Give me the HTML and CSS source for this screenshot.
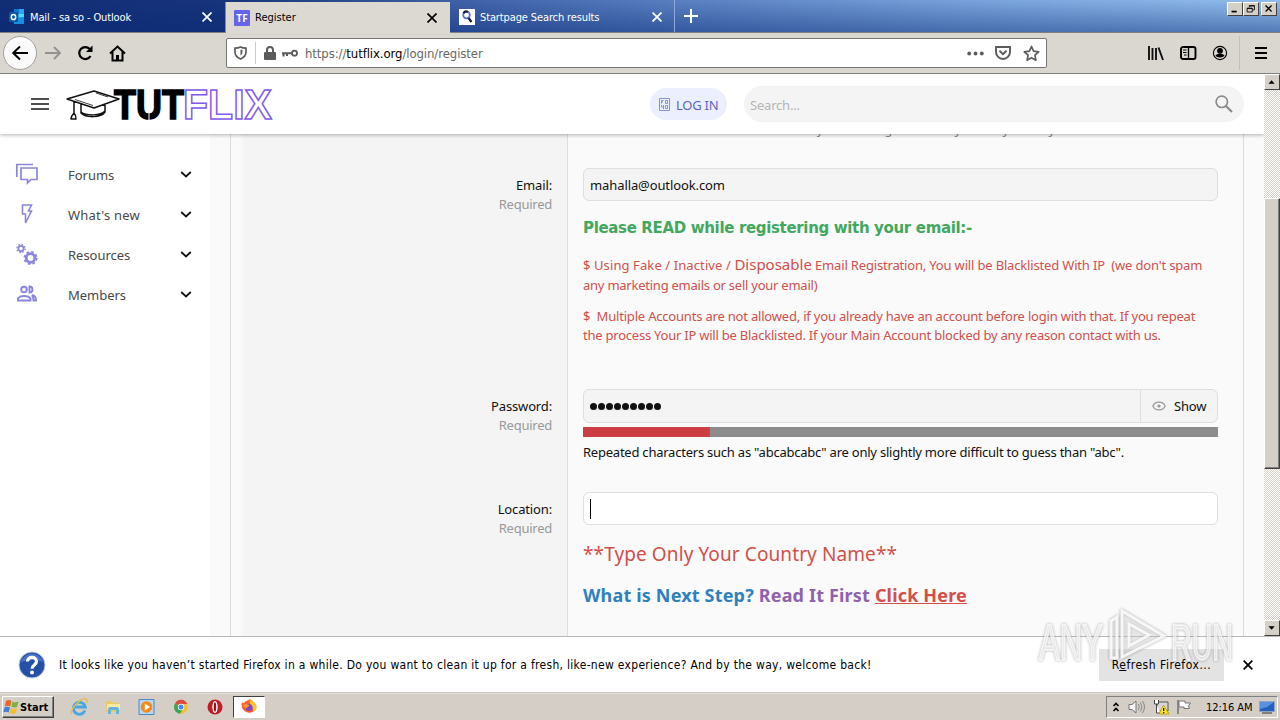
FILE: index.html
```html
<!DOCTYPE html>
<html lang="en">
<head>
<meta charset="utf-8">
<title>Register</title>
<link rel="stylesheet" href="styles.css">
</head>
<body>
<div class="tabs">
  <div class="tab tab-first">
    <svg width="16" height="16" viewBox="0 0 16 16"><path d="M5 0h10v9H5z" fill="#28a8ea"/><path d="M5 0h5v5H5z" fill="#0f78c8"/><path d="M10 5h5v4h-5z" fill="#50d9ff"/><path d="M4 9l11-1v7H5z" fill="#1490df"/><rect y="3" width="9" height="10" rx="1" fill="#0358a7"/><ellipse cx="4.5" cy="8" rx="2.2" ry="2.6" fill="none" stroke="#fff" stroke-width="1.5"/></svg>
    <span class="tab-title t-mail">Mail - sa so - Outlook</span>
    <svg class="x" width="10" height="10" viewBox="0 0 10 10"><path d="M.5.5l9 9m0-9l-9 9"/></svg>
  </div>
  <div class="tab tab-active">
    <span class="tf">TF</span>
    <span class="tab-title t-reg">Register</span>
    <svg class="x" width="10" height="10" viewBox="0 0 10 10"><path d="M.5.5l9 9m0-9l-9 9"/></svg>
  </div>
  <div class="tab tab-last">
    <svg width="16" height="16" viewBox="0 0 16 16"><path d="M0 0h16v16H0z" fill="#fff"/><circle cx="7.5" cy="6" r="3.3" fill="none" stroke="#5a70e0" stroke-width="1.8"/><path d="M4.5 4.2A3.4 3.4 0 0 1 9 3M9.5 9l3 4" stroke="#151a40" stroke-width="2.2" fill="none"/></svg>
    <span class="tab-title t-start">Startpage Search results</span>
    <svg class="x" width="10" height="10" viewBox="0 0 10 10"><path d="M.5.5l9 9m0-9l-9 9"/></svg>
  </div>
  <svg class="plus" width="14" height="14" viewBox="0 0 14 14"><path d="M7 0v14M0 7h14" stroke="#fff" stroke-width="2"/></svg>
  <div class="winbtns">
    <svg class="wb" width="16" height="14" viewBox="0 0 16 14"><path d="M4 10h6" stroke="#000" stroke-width="2"/></svg>
    <svg class="wb" width="16" height="14" viewBox="0 0 16 14"><path d="M6 5V3h6v5h-2M6 3.500h6M3.500 6h6v4.500h-6zM3.500 6.500h6" stroke="#000" fill="none"/></svg>
    <svg class="wb wb-close" width="16" height="14" viewBox="0 0 16 14"><path d="M4 3l7 7m0-7l-7 7" stroke="#000" stroke-width="1.600"/></svg>
  </div>
</div>

<div class="toolbar">
  <span class="back"><svg width="18" height="16" viewBox="0 0 18 16"><path d="M17 8H2.500M9 1.500L2.200 8 9 14.500" stroke="#000" stroke-width="2" fill="none"/></svg></span>
  <svg class="fwd" width="17" height="14" viewBox="0 0 17 14"><path d="M0 7h15M9 1l6 6-6 6" stroke="#939290" stroke-width="1.900" fill="none"/></svg>
  <svg class="reload" width="17" height="16" viewBox="0 0 17 16"><path d="M13.500 11a6 6 0 1 1-.8-7" stroke="#000" stroke-width="2.200" fill="none"/><path d="M15.500.5V7H9z"/></svg>
  <svg class="home" width="17" height="17" viewBox="0 0 17 17"><path d="M1 8.500l7.500-7 7.500 7M3.500 7v8.500h10V7" stroke="#000" stroke-width="2" fill="none"/><path d="M7 10h3v5H7z"/></svg>
  <div class="url">
    <svg class="shield" width="13" height="14" viewBox="0 0 13 14"><path d="M6.500 1C4.500 2 2.500 2.200 1 2.200V6c0 3.500 2 5.500 5.500 7C10 11.500 12 9.500 12 6V2.200C10.500 2.200 8.500 2 6.500 1z" stroke="#5b5b5b" stroke-width="1.700" fill="none"/><path d="M6.500 3.500v6c1.500-1 2-2 2-5.500z" fill="#5b5b5b"/></svg>
    <i class="url-sep"></i>
    <svg class="lock" width="12" height="14" viewBox="0 0 12 14"><path d="M3 7V4a3 3 0 0 1 6 0v3" stroke="#5b5b5b" stroke-width="2" fill="none"/><rect y="6" width="12" height="8" rx="1" fill="#5b5b5b"/></svg>
    <svg class="key" width="16" height="9" viewBox="0 0 16 9"><circle cx="12.500" cy="4.200" r="2.500" stroke="#5b5b5b" stroke-width="1.800" fill="none"/><path d="M10 4.200H0M1.500 4v3.500M5 4v3" stroke="#5b5b5b" stroke-width="2" fill="none"/></svg>
    <span class="addr">https://<b>tutflix.org</b>/login/register</span>
    <svg class="dots" width="17" height="5" viewBox="0 0 17 5" fill="#5b5b5b"><circle cx="2.200" cy="2.500" r="1.900"/><circle cx="8.500" cy="2.500" r="1.900"/><circle cx="14.800" cy="2.500" r="1.900"/></svg>
    <svg class="pocket" width="16" height="14" viewBox="0 0 16 14"><path d="M1 1h14v5a7 7 0 0 1-14 0z M4.500 4.800L8 8.200l3.500-3.400" stroke="#5b5b5b" stroke-width="1.900" fill="none"/></svg>
    <svg class="star" width="17" height="17" viewBox="0 0 17 17"><path d="M8.500 1.500l2.100 4.700 5.100.6-3.800 3.400 1 5-4.400-2.500-4.400 2.500 1-5L1.300 6.800l5.100-.6z" stroke="#5b5b5b" stroke-width="1.700" fill="none" stroke-linejoin="round"/></svg>
  </div>
  <svg class="lib" width="16" height="15" viewBox="0 0 16 15"><path d="M1 0v14M4.500 2v12M8 2v12M10.500 1.500L15 14" stroke="#111" stroke-width="1.900"/></svg>
  <svg class="side-i" width="17" height="14" viewBox="0 0 17 14"><rect x="1" y="1" width="14.500" height="12" rx="2" stroke="#000" stroke-width="1.900" fill="none"/><path d="M8.500 1v12" stroke="#000" stroke-width="1.400"/><path d="M3 4h3.500M3 6.500h3.500M4 9h2.500" stroke="#000"/></svg>
  <svg class="acct" width="16" height="16" viewBox="0 0 16 16"><circle cx="8" cy="8" r="6.600" stroke="#000" stroke-width="1.100" fill="none"/><circle cx="8" cy="5.800" r="2.900"/><path d="M3.500 10.500c1.500-2.500 7.500-2.500 9 0-1.500 2.500-7 2.800-9 0z"/></svg>
  <i class="tb-sep"></i>
  <svg class="menu" width="12" height="14" viewBox="0 0 12 14"><path d="M0 2h12M0 7h12M0 12h12" stroke="#000" stroke-width="2"/></svg>
</div>

<div class="view">
  <div class="page">
    <header class="head">
      <svg class="burger" width="18" height="12" viewBox="0 0 18 12"><path d="M0 1h18M0 6h18M0 11h18" stroke="#4f4f4f" stroke-width="2"/></svg>
      <svg class="logo" width="210" height="50" viewBox="0 -5 210 50">
        <path d="M15 19v9c5 5 20 5 24-1v-8M15 27c5 4 20 4 24-1M1 14L28 6l25 8-25 9zM8 16v14M8 28c-3 3-3 5-3 6h5c0-2 0-4-2-6z" fill="#fff" stroke="#111" stroke-width="1.500" stroke-linejoin="round"/>
        <path d="M30 8l12 4M9 14.500l18 6M18 30l5 1.500" stroke="#111" stroke-width=".8" fill="none"/>
        <text class="logo-tut" x="48" y="34" textLength="70" lengthAdjust="spacingAndGlyphs">TUT</text>
        <path d="M83 27v9M59.500 10" stroke="#fff" stroke-width="1"/>
        <text class="logo-flix" x="117" y="34" textLength="89" lengthAdjust="spacingAndGlyphs">FLIX</text>
      </svg>
      <a class="login"><svg width="11" height="13" viewBox="0 0 11 13"><path d="M.5.500h10v12H.5zM2.500 5.500v-3h2M2.500 4h1.500M6.500 2.500h2v3h-2zM2.500 7v2h2M4.500 7v4M6.500 7.500h2v3h-2z" fill="none" stroke="#7179d2" stroke-width=".8"/></svg><span>LOG IN</span></a>
      <div class="search"><span>Search...</span><svg width="18" height="18" viewBox="0 0 18 18"><circle cx="6.800" cy="6.800" r="5.700" fill="none" stroke="#8b8b8b" stroke-width="1.700"/><path d="M11 11l6 6" stroke="#8b8b8b" stroke-width="2.200"/></svg></div>
    </header>
    <div class="body">
      <nav class="nav">
        <a><svg width="24" height="24" viewBox="0 0 24 24"><path d="M1.800 15V2.500H18M6 6h16v11.500h-6L12.500 21v-3.500H6z" fill="none" stroke="#8b86dc" stroke-width="1.700"/></svg><span>Forums</span><svg class="chev" width="12" height="7" viewBox="0 0 12 7"><path d="M1.200 1L6 5.500 10.800 1"/></svg></a>
        <a><svg width="24" height="24" viewBox="0 0 24 24"><path d="M7.500 3h9l-3 6h3L10.500 21v-9h-3z" fill="none" stroke="#8b86dc" stroke-width="1.600"/></svg><span class="n2">What's new</span><svg class="chev" width="12" height="7" viewBox="0 0 12 7"><path d="M1.200 1L6 5.500 10.800 1"/></svg></a>
        <a><svg width="24" height="24" viewBox="0 0 24 24" fill="none" stroke="#8b86dc"><circle cx="6" cy="6.500" r="2.600" stroke-width="1.600"/><circle cx="6" cy="6.500" r="4" stroke-width="1.400" stroke-dasharray="1.600 1.540"/><circle cx="15.500" cy="16" r="4.300" stroke-width="2.800"/><circle cx="15.500" cy="16" r="6.100" stroke-width="1.800" stroke-dasharray="2.500 2.290"/></svg><span>Resources</span><svg class="chev" width="12" height="7" viewBox="0 0 12 7"><path d="M1.200 1L6 5.500 10.800 1"/></svg></a>
        <a><svg width="24" height="24" viewBox="0 0 24 24" fill="none" stroke="#8b86dc" stroke-width="1.900"><circle cx="9" cy="7.500" r="2.800"/><path d="M14.500 4.500a3 3 0 0 1 0 6zM3 18.500v-2c2-3.300 10.500-3.300 12.500 0v2zM17 13c2.500.5 4 2 4 5.500h-2.500c0-2-.5-3.500-1.500-5.500"/></svg><span>Members</span><svg class="chev" width="12" height="7" viewBox="0 0 12 7"><path d="M1.200 1L6 5.500 10.800 1"/></svg></a>
      </nav>
      <main class="main">
        <div class="panel">
          <div class="row row-top"><div class="lab"></div><div class="fld"><p class="hint">This is the name that will be shown with your messages. You may use any name you wish.</p></div></div>
          <div class="row row-email">
            <div class="lab"><span>Email:</span><small>Required</small></div>
            <div class="fld">
              <div class="inp"><span class="v-mail">mahalla@outlook.com</span></div>
              <h4 class="green">Please READ while registering with your email:-</h4>
              <p class="red r1"><span class="a1">$ Using Fake / Inactive / </span><span class="big">Disposable</span><span class="a2"> Email Registration, You will be Blacklisted With IP&nbsp; (we don't spam</span><br><span class="a3">any marketing emails or sell your email)</span></p>
              <p class="red r2"><span class="a4">$&nbsp; Multiple Accounts are not allowed, if you already have an account before login with that. If you repeat</span><br><span class="a5">the process Your IP will be Blacklisted. If your Main Account blocked by any reason contact with us.</span></p>
            </div>
          </div>
          <div class="row row-pass">
            <div class="lab"><span>Password:</span><small>Required</small></div>
            <div class="fld">
              <div class="inp inp-pass"><span class="bullets"><i></i><i></i><i></i><i></i><i></i><i></i><i></i><i></i><i></i></span><span class="show"><svg width="14" height="10" viewBox="0 0 14 10"><path d="M.8 5C3-.2 11-.2 13.200 5 11 10.200 3 10.200.8 5z" fill="none" stroke="#999" stroke-width="1.200"/><circle cx="7" cy="5" r="1.600" fill="#999"/></svg>Show</span></div>
              <div class="meter"><i></i></div>
              <p class="note">Repeated characters such as "abcabcabc" are only slightly more difficult to guess than "abc".</p>
            </div>
          </div>
          <div class="row row-loc">
            <div class="lab"><span>Location:</span><small>Required</small></div>
            <div class="fld">
              <div class="inp inp-loc"><i class="caret"></i></div>
              <p class="type">**Type Only Your Country Name**</p>
              <p class="next"><span class="blue">What is Next Step?</span> <span class="purple">Read It First</span> <a>Click Here</a></p>
            </div>
          </div>
        </div>
      </main>
    </div>
  </div>
  <div class="scroll">
    <svg class="sb" width="16" height="16" viewBox="0 0 16 16"><path d="M4 10h7L7.500 6z"/></svg>
    <div class="thumb"></div>
    <svg class="sb sb-down" width="16" height="16" viewBox="0 0 16 16"><path d="M4 6h7l-3.500 4z"/></svg>
  </div>
</div>

<div class="notice">
  <svg class="q" width="28" height="28" viewBox="0 0 28 28"><circle cx="14" cy="14" r="13" fill="#2450a8" stroke="#b9c6e0"/><path d="M3 11a11.500 11.500 0 0 1 22 0c-7-3-15-2-22 0z" fill="#4d74c4"/><path d="M9.500 10.500c0-5.500 9-5.500 9 0 0 3.500-4.500 3.500-4.500 7.200" fill="none" stroke="#fff" stroke-width="3.200"/><circle cx="14" cy="21.500" r="2" fill="#fff"/></svg>
  <span class="notice-t">It looks like you haven’t started Firefox in a while. Do you want to clean it up for a fresh, like-new experience? And by the way, welcome back!</span>
  <span class="refresh"><span>R<u>e</u>fresh Firefox...</span></span>
  <svg class="nx" width="10" height="10" viewBox="0 0 10 10"><path d="M.7.7l8.600 8.600m0-8.600L.7 9.300" stroke="#000" stroke-width="1.800"/></svg>
</div>

<div class="task">
  <div class="start"><svg width="17" height="16" viewBox="0 0 17 16"><path d="M3 2c2-1.500 4-1 5.500 0L7.300 7.500C5.500 6.500 4 6.500 1.800 7.500z" fill="#e8662b"/><path d="M9.500 2.500c2 1.200 4 1 6 0l-1.300 5.300c-2 1-4 .8-5.800-.3z" fill="#79b540"/><path d="M1.500 8.500c2-1 4-.8 5.500 0l-1.300 5c-1.700-1-3.500-1-5.500 0z" fill="#3f82d6"/><path d="M8 9c2 1.200 4 1 6 .2l-1.400 5c-2 1-4 .8-5.900-.4z" fill="#f6bf26"/></svg><b>Start</b></div>
  <svg class="ti" width="18" height="18" viewBox="0 0 18 18"><path d="M15 12.500A6 6 0 1 1 15.300 9H5" fill="none" stroke="#48a6e2" stroke-width="2.800"/><path d="M1.500 16C-.5 12 12-2.500 16.500 1.500c1 1 .5 2.500 0 3.500" fill="none" stroke="#e6bd48" stroke-width="1.400"/></svg>
  <svg class="ti" width="18" height="18" viewBox="0 0 18 18"><path d="M2 3h6l1 2h7v9H2z" fill="#eccb62"/><path d="M3 6h13v6H3z" fill="#f9e9a7"/><path d="M4 16V11q0-2 2-2h7q2 0 2 2v5h-3v-4H7v4z" fill="#65b4dc"/></svg>
  <svg class="ti" width="18" height="18" viewBox="0 0 18 18"><path d="M1 1.500h15v15H1z" fill="#b7d6f0" stroke="#4b89c8"/><circle cx="8.500" cy="9" r="5.800" fill="#f28a19"/><path d="M6.800 5.500L12 9l-5.200 3.500z" fill="#fff"/></svg>
  <svg class="ti" width="18" height="18" viewBox="0 0 18 18"><circle cx="9" cy="9" r="6.800" fill="#f2c230"/><path d="M9 9L3 5.500a6.800 6.800 0 0 1 12.300.5H9z" fill="#dd4b3c"/><path d="M9 9L3 5.500A6.800 6.800 0 0 0 8 15.700L11 11z" fill="#3ba35a"/><circle cx="9" cy="9" r="3.200" fill="#fff"/><circle cx="9" cy="9" r="2.500" fill="#4688ea"/></svg>
  <svg class="ti" width="18" height="18" viewBox="0 0 18 18"><circle cx="9" cy="9" r="7.500" fill="#c01c22"/><ellipse cx="9" cy="9" rx="2.700" ry="6" fill="#fff"/><ellipse cx="9" cy="9" rx="1.200" ry="4.800" fill="#9a1218"/></svg>
  <div class="ff"><svg width="18" height="18" viewBox="0 0 18 18"><path d="M2 4.500l2 .5C6 2.500 8 3 10 1c3 2 6 4 6.500 8.500a7.500 7.500 0 1 1-14.500-5z" fill="#fb5f2d"/><path d="M10 1c3 2 6 4 6.500 8.500-.5 3-2 4-3.500 4C14.500 8 8 7 10 1z" fill="#ffc531"/><circle cx="9" cy="9.500" r="3.500" fill="#7948d4"/><path d="M3 7c3-2 5-1 6.500.5L6 10.500z" fill="#ff9a2d"/></svg></div>
  <div class="tray">
    <svg width="8" height="12" viewBox="0 0 8 12"><path d="M1.500 5L4 2.500 6.500 5M1.500 10L4 7.500 6.500 10" fill="none" stroke="#000" stroke-width="1.600"/></svg>
    <svg class="tr-v" width="18" height="14" viewBox="0 0 18 14"><path d="M1 4.500h3l4-3.500v12L4 9.500H1z" fill="#f5f5f5" stroke="#777"/><path d="M10.500 4q1.500 3 0 6M12.500 2.500q3 4.500 0 9M14.500 1q4 6 0 12" fill="none" stroke="#888"/></svg>
    <svg class="tr-n" width="17" height="16" viewBox="0 0 17 16"><path d="M4 3h11v9H4z" fill="#d7d7d7" stroke="#555"/><path d="M1.500 1v4h4V1M3.500 5v9h4" stroke="#444" fill="#fff"/><path d="M10.500 6l5.500 9H6z" fill="#ffe22b" stroke="#b99700" stroke-width=".8"/><path d="M10.700 9v3M10.700 13v1.200" stroke="#000" stroke-width="1.200"/></svg>
    <svg class="tr-f" width="16" height="16" viewBox="0 0 16 16"><path d="M2 1v14" stroke="#777" stroke-width="1.600"/><path d="M3 2h6v2h5.500l-2 3 1 2.500H8V8H3z" fill="#fff" stroke="#777"/></svg>
    <span class="clock">12:16 AM</span>
    <svg class="tr-d" width="16" height="13" viewBox="0 0 16 13"><path d="M.5.500h15v10H.5z" fill="#2460bd" stroke="#8fa4c0"/><path d="M1 1h14L8 6 1 8z" fill="#5593e0"/><path d="M3 12h10" stroke="#333"/></svg>
  </div>
</div>

<svg class="mark" width="204" height="76" viewBox="0 0 204 76">
  <g class="mark-g">
    <text x="3" y="54" textLength="64" lengthAdjust="spacingAndGlyphs">ANY</text>
    <path d="M75 52V15l6-4v41zM86 5v46l42-21zM93 18v22l20-11z"/>
    <text x="135" y="54" textLength="62" lengthAdjust="spacingAndGlyphs">RUN</text>
  </g>
</svg>
</body>
</html>
```

FILE: styles.css
```css
* { box-sizing: border-box; }
body { margin: 0; width: 1280px; height: 720px; overflow: hidden; position: relative; display: flex; flex-direction: column; font: 12px "DejaVu Sans Condensed", "DejaVu Sans", sans-serif; color: #000; }
svg { display: block; flex: none; }
p, h4 { margin: 0; }
span, p, small, h4 { white-space: nowrap; }

.tabs { height: 33px; flex: none; display: flex; border-bottom: 1px solid #808080; background: linear-gradient(180deg, rgba(90,130,210,.1), rgba(15,50,125,.5)), linear-gradient(90deg, #0a246a 0, #0f2b72 225px, #3a5ca2 450px, #5b80c0 680px, #7ca6dc 960px, #98c4f0 1280px); }
.tab { width: 225px; display: flex; align-items: center; padding: 2px 13px 0 9px; color: #fff; font-size: 11px; }
.tab-active { background: #dcd8d2; color: #000; margin-top: 2px; padding-top: 0; border-left: 1px solid #8a8a8a; height: 31px; padding-left: 8px; }
.tab-last { border-right: 1px solid #8fa9d6; padding-right: 12px; }
.tab-title { margin-left: 5px; }
.t-mail { letter-spacing: -.13px; }
.t-start { letter-spacing: -.12px; }
.tab .x { margin-left: auto; fill: none; stroke: #fff; stroke-width: 1.700; }
.tab-active .x { stroke: #000; }
.tf { width: 16px; height: 16px; background: #6464e8; border-radius: 1px; color: #fff; font: bold 10px/16px "Open Sans", sans-serif; text-align: center; }
.plus { margin: 9px 0 0 9px; }
.winbtns { margin: 2px 3px 0 auto; display: flex; }
.wb { background: #d4d0c8; border: 1px solid; border-color: #fff #404040 #404040 #fff; }
.wb-close { margin-left: 2px; }

.toolbar { height: 41px; flex: none; background: #dad7d1; border-bottom: 1px solid #808080; display: flex; align-items: center; }
.back { width: 34px; height: 34px; margin-left: 3px; border-radius: 50%; background: #fafafa; border: 1px solid #a6a39e; display: flex; align-items: center; justify-content: center; }
.fwd { margin-left: 8px; }
.reload { margin-left: 15px; }
.home { margin-left: 15px; }
.url { margin-left: 100px; width: 821px; height: 30px; background: #fff; border: 1px solid #77756f; border-radius: 2px; display: flex; align-items: center; }
.shield { margin-left: 7px; }
.url-sep { width: 1px; height: 22px; background: #ccc; margin-left: 8px; }
.lock { margin-left: 8px; }
.key { margin-left: 6px; }
.addr { margin-left: 7px; color: #666; font-size: 13px; letter-spacing: -.08px; }
.addr b { color: #000; font-weight: normal; }
.dots { margin-left: auto; }
.pocket { margin-left: 11px; }
.star { margin-left: 12px; margin-right: 6px; }
.lib { margin-left: 101px; }
.side-i { margin-left: 16px; }
.acct { margin-left: 15px; }
.tb-sep { width: 1px; height: 34px; background: #c3c0ba; margin-left: 11px; }
.menu { margin-left: 15px; }

.view { height: 562px; flex: none; display: flex; }
.page { width: 1264px; display: flex; flex-direction: column; overflow: hidden; font-family: "Noto Sans", sans-serif; }
.head { height: 60px; flex: none; position: relative; z-index: 1; background: #fff; box-shadow: 0 1px 4px rgba(0,0,0,.3); display: flex; align-items: center; }
.burger { margin-left: 31px; }
.logo { margin-left: 17px; margin-top: 2px; overflow: visible; }
.logo-tut { font: bold 42px "Liberation Sans", sans-serif; fill: #000; stroke: #000; stroke-width: 1.600; }
.logo-flix { font: bold 42px "Liberation Sans", sans-serif; fill: #fff; stroke: #8358ee; stroke-width: 1.500; }
.login { margin-left: 374px; width: 77px; height: 32px; border-radius: 16px; background: #ecf0fe; color: #5d63c4; display: flex; align-items: center; padding-left: 9px; font-size: 13px; }
.login span { margin-left: 6px; margin-top: 2px; letter-spacing: -.25px; }
.search { margin-left: 17px; width: 500px; height: 36px; border-radius: 18px; background: #f4f4f4; display: flex; align-items: center; justify-content: space-between; padding: 0 11px 0 6px; color: #b5b5b5; font-size: 13px; letter-spacing: -.2px; }
.search span { margin-top: 2px; }
.body { display: flex; flex: 1; min-height: 0; background: #fafafa; }
.nav { width: 210px; background: #fff; padding-top: 20px; }
.nav a { height: 40px; display: flex; align-items: center; padding: 0 18px 0 15px; color: #484848; font-size: 13px; letter-spacing: -.02px; }
.nav a span { margin-left: 29px; margin-top: 2px; }
.nav .n2 { letter-spacing: .2px; }
.chev { margin-left: auto; fill: none; stroke: #111; stroke-width: 1.800; }
.main { padding-left: 20px; }
.panel { width: 1014px; height: 502px; border: solid #dcdcdc; border-width: 0 1px; overflow: hidden; }
.row { display: flex; }
.lab { width: 337px; flex: none; border-right: 1px solid #dedede; background: linear-gradient(90deg, #fafafa 9px, #f4f4f4 13px); text-align: right; padding: 28px 15px 0 0; font-size: 13px; line-height: 19px; letter-spacing: -.15px; color: #111; display: flex; flex-direction: column; }
.lab small { color: #999; font-size: 13px; letter-spacing: -.25px; }
.fld { padding: 20px 25px 0 15px; width: 675px; flex: none; }
.row-top { height: 14px; }
.row-top .fld, .row-top .lab { padding-top: 0; }
.hint { font-size: 13px; line-height: 18px; letter-spacing: -.31px; color: #888; margin-top: -14px; }
.row-email { height: 221px; }
.row-pass { height: 103px; }
.row-loc { height: 170px; }
.inp { height: 33px; width: 635px; border: 1px solid #dedede; border-radius: 6px; background: #f4f4f4; display: flex; align-items: center; padding-left: 6px; font-size: 13px; color: #111; }
.v-mail { letter-spacing: -.1px; }
.green { margin-top: 17px; font: bold 15px/20px "DejaVu Sans", sans-serif; letter-spacing: -.34px; color: #41a85f; }
.red { color: #d0504b; font-size: 13px; line-height: 20px; }
.r1 { margin-top: 17px; }
.r2 { margin-top: 12px; line-height: 19px; }
.a1 { letter-spacing: .1px; }
.a2 { letter-spacing: -.17px; }
.a3 { letter-spacing: -.24px; }
.a4 { letter-spacing: -.195px; }
.a5 { letter-spacing: -.23px; }
.big { font-size: 15px; line-height: 19px; }
.inp-pass { height: 34px; }
.bullets { display: flex; gap: 1px; }
.bullets i { width: 7px; height: 7px; border-radius: 50%; background: #111; }
.show { margin-left: auto; height: 32px; width: 77px; border-left: 1px solid #dedede; display: flex; align-items: center; padding-left: 11px; gap: 8px; letter-spacing: -.2px; }
.meter { margin-top: 4px; height: 10px; background: #8c8c8c; width: 635px; }
.meter i { display: block; width: 127px; height: 10px; background: #cc3e44; }
.note { margin-top: 6px; font-size: 13px; line-height: 19px; letter-spacing: -.23px; color: #111; }
.inp-loc { background: #fff; }
.caret { width: 1px; height: 20px; background: #000; }
.type { margin-top: 17px; font-size: 19px; line-height: 25px; letter-spacing: .1px; color: #d0504b; }
.next { margin-top: 16px; font: bold 18px/25px "Noto Sans", sans-serif; letter-spacing: .17px; }
.blue { color: #3080be; }
.purple { color: #8f62ad; }
.next a { color: #d44f49; text-decoration: underline; }

.scroll { width: 16px; display: flex; flex-direction: column; background: repeating-conic-gradient(#d4d0c8 0 25%, #fff 0 50%) 0 0 / 2px 2px; }
.sb { background: #d4d0c8; border: 1px solid; border-color: #fff #404040 #404040 #fff; }
.sb-down { margin-top: auto; }
.thumb { margin-top: 108px; height: 271px; background: #d4d0c8; border: 1px solid; border-color: #fff #404040 #404040 #fff; box-shadow: inset -1px -1px #808080; }

.notice { height: 57px; flex: none; border-top: 1px solid #b9b9b9; border-bottom: 1px solid #c9c6c0; background: #fff; display: flex; align-items: center; }
.q { margin-left: 18px; }
.notice-t { margin-left: 13px; margin-top: 1px; font-size: 12px; letter-spacing: .3px; }
.refresh { margin-left: auto; margin-top: 1px; width: 125px; height: 32px; background: #e3e3e3; display: flex; align-items: center; justify-content: center; font-size: 12px; letter-spacing: .53px; }
.nx { margin-left: 19px; margin-right: 27px; }

.task { height: 27px; flex: none; background: #d4cec6; border-top: 1px solid #e6e2dc; display: flex; align-items: center; }
.start { margin-left: 2px; width: 52px; height: 22px; border: 1px solid; border-color: #fff #404040 #404040 #fff; box-shadow: inset -1px -1px #808080; display: flex; align-items: center; font-size: 11px; }
.start b { letter-spacing: .05px; }
.ti { margin-left: 16px; }
.start + .ti { margin-left: 16px; }
.ff { margin-left: 9px; width: 32px; height: 22px; background: #fff; border: 1px solid; border-color: #404040 #fff #fff #404040; display: flex; align-items: center; justify-content: center; }
.tray { margin-left: auto; margin-right: 2px; width: 172px; height: 22px; border: 1px solid; border-color: #808080 #fff #fff #808080; display: flex; align-items: center; padding-left: 5px; font-size: 11px; }
.tr-v { margin-left: 8px; }
.tr-n { margin-left: 7px; }
.tr-f { margin-left: 6px; }
.clock { margin-left: 14px; letter-spacing: -.05px; }
.tr-d { margin-left: auto; margin-right: 2px; }

.mark { position: absolute; left: 1036px; top: 606px; z-index: 3; }
.mark-g { fill: rgba(255,255,255,.65); stroke: rgba(255,255,255,.65); stroke-width: 2; filter: drop-shadow(0 0 1.500px rgba(0,0,0,.4)); font: 50px "Liberation Sans", sans-serif; }
.mark path { fill: rgba(255,255,255,.3); stroke: rgba(255,255,255,.85); stroke-width: 3; }
```
